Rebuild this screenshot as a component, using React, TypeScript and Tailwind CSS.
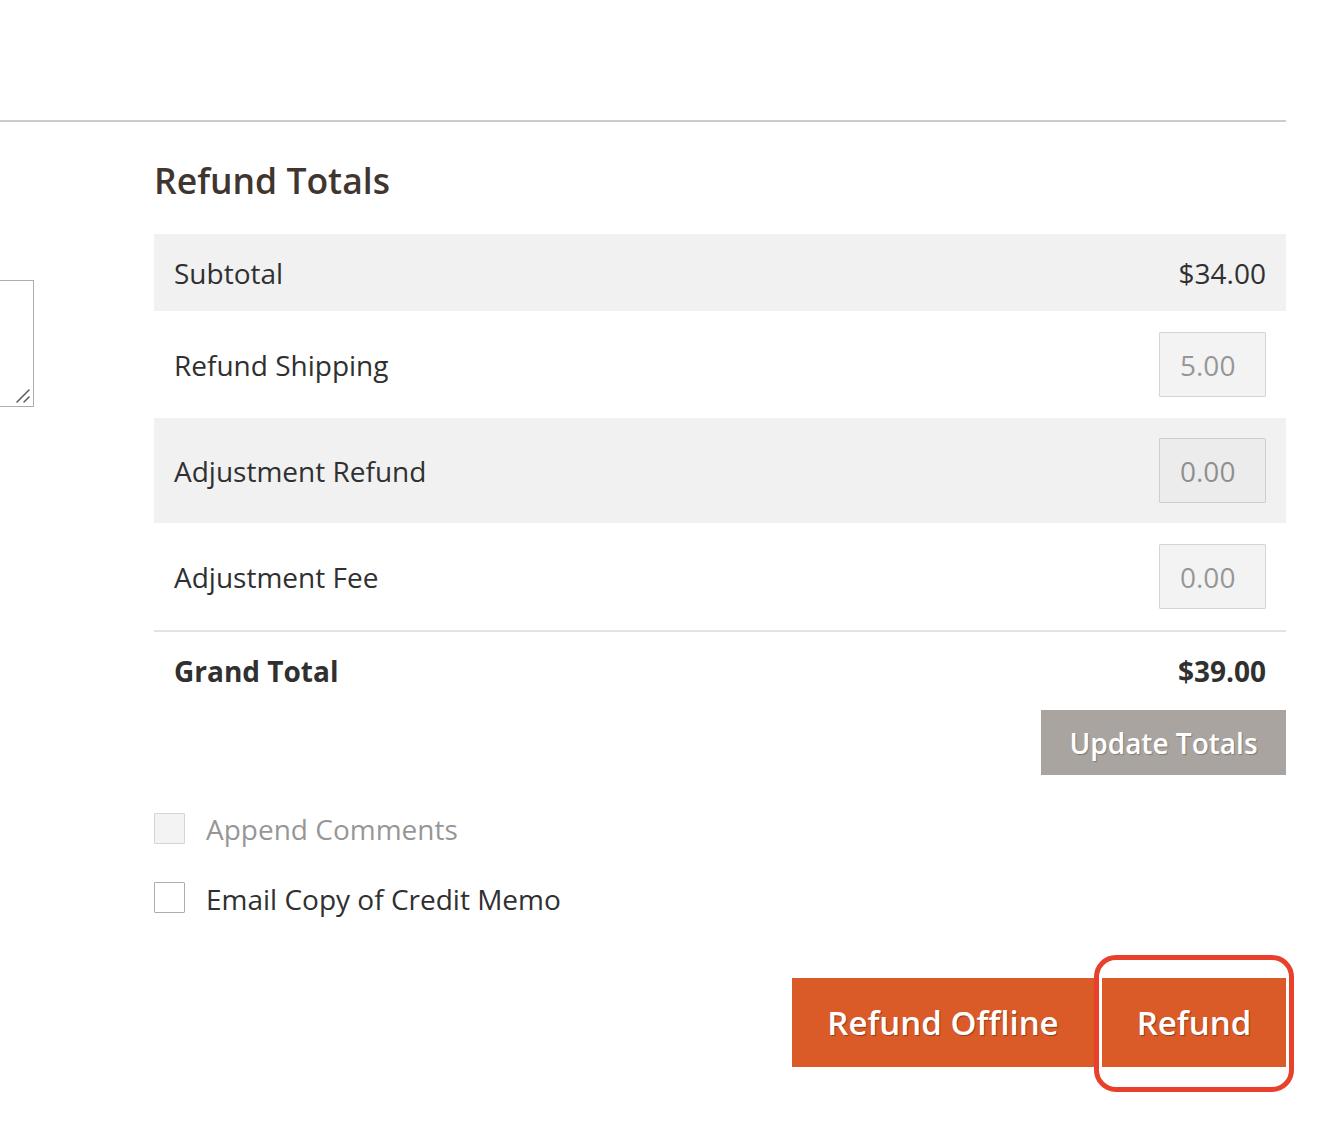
import React from 'react'

const font = "font-['Open_Sans',sans-serif]"

const AmountInput: React.FC<{ value: string }> = ({ value }) => (
    <input
        type="text"
        disabled
        value={value}
        readOnly
        className="w-[107px] h-[65px] px-[20px] border border-[#adadad] bg-[#e9e9e9] text-[#303030] text-[28px] opacity-50 rounded-[1px] outline-none"
    />
)

const App: React.FC = () => {
    return (
        <div className={`${font} relative w-[1328px] h-[1146px] bg-white overflow-hidden text-[#303030]`}>
            <div className="h-[120px]" />
            <div className="w-[1286px] h-[2px] bg-[#cccccc]" />

            <div className="flex">
                {/* left column, mostly scrolled out of view */}
                <div className="w-[154px] shrink-0">
                    <div className="relative mt-[158px] -ml-[200px] w-[234px] h-[127px]">
                        <textarea
                            className="block w-full h-full resize-none border border-[#adadad] bg-white"
                            readOnly
                        />
                        <svg className="absolute right-[3px] bottom-[3px]" width="16" height="16" viewBox="0 0 16 16">
                            <path d="M2 14 L14 2" stroke="#555" strokeWidth="1.5" strokeLinecap="round" />
                            <path d="M9 14 L14 9" stroke="#555" strokeWidth="1.5" strokeLinecap="round" />
                        </svg>
                    </div>
                </div>

                <div className="w-[1132px] shrink-0">
                    <h2 className="pt-[36px] mb-[32px] text-[35.5px] leading-[44px] font-semibold text-[#41362f]">
                        Refund Totals
                    </h2>

                    <div className="text-[28px]">
                        <div className="flex items-center justify-between h-[77px] px-[20px] bg-[#f1f1f1]">
                            <span>Subtotal</span>
                            <span>$34.00</span>
                        </div>
                        <div className="flex items-center justify-between h-[107px] px-[20px]">
                            <span>Refund Shipping</span>
                            <AmountInput value="5.00" />
                        </div>
                        <div className="flex items-center justify-between h-[105px] px-[20px] bg-[#f1f1f1]">
                            <span>Adjustment Refund</span>
                            <AmountInput value="0.00" />
                        </div>
                        <div className="flex items-center justify-between h-[107px] px-[20px]">
                            <span>Adjustment Fee</span>
                            <AmountInput value="0.00" />
                        </div>
                        <div className="h-[2px] bg-[#e3e3e3]" />
                        <div className="flex items-center justify-between pt-[19px] px-[20px] leading-[40px] font-bold">
                            <span>Grand Total</span>
                            <span>$39.00</span>
                        </div>
                    </div>

                    <div className="flex justify-end mt-[19px]">
                        <button className="w-[245px] h-[65px] bg-[#a9a49f] text-white text-[28px] font-semibold [text-shadow:1px_1px_1px_rgba(0,0,0,0.25)]">
                            Update Totals
                        </button>
                    </div>

                    <div className="mt-[38px] flex items-start h-[31px] gap-[21px] opacity-50">
                        <span className="shrink-0 w-[31px] h-[31px] border border-[#adadad] bg-[#e9e9e9] rounded-[1px]" />
                        <span className="text-[28px] leading-[33px]">Append Comments</span>
                    </div>
                    <div className="mt-[38px] flex items-start h-[31px] gap-[21px]">
                        <span className="shrink-0 w-[31px] h-[31px] border border-[#adadad] bg-white rounded-[1px]" />
                        <span className="text-[28px] leading-[35px]">Email Copy of Credit Memo</span>
                    </div>

                    <div className="mt-[65px] flex justify-end gap-[8px]">
                        <button className="w-[302px] h-[89px] bg-[#da5b28] text-white text-[33px] font-semibold [text-shadow:1px_1px_1px_rgba(0,0,0,0.35)]">
                            Refund Offline
                        </button>
                        <button className="w-[184px] h-[89px] bg-[#da5b28] text-white text-[33px] font-semibold [text-shadow:1px_1px_1px_rgba(0,0,0,0.35)]">
                            Refund
                        </button>
                    </div>
                </div>
            </div>

            {/* highlight drawn over the Refund button */}
            <div className="absolute left-[1094px] top-[955px] w-[200px] h-[137px] border-[5px] border-[#e8402a] rounded-[22px] pointer-events-none" />
        </div>
    )
}

export default App
